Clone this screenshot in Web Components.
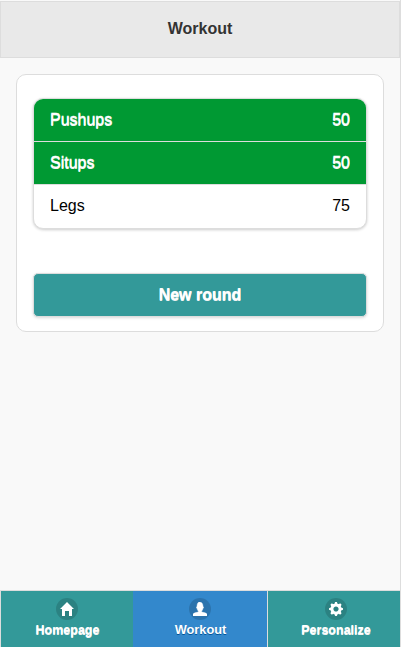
<!DOCTYPE html>
<html lang="en">
<head>
<meta charset="utf-8">
<title>Workout</title>
<style>
html, body { margin: 0; height: 100%; overflow: hidden; }
body { font: 16px/1.3 "Liberation Sans", Arial, sans-serif; color: #333; background: #f9f9f9; }
</style>
</head>
<body>
<workout-app>
  <app-header slot="header">Workout</app-header>
  <workout-card>
    <exercise-list>
      <exercise-row done>Pushups<span slot="count">50</span></exercise-row>
      <exercise-row done>Situps<span slot="count">50</span></exercise-row>
      <exercise-row>Legs<span slot="count">75</span></exercise-row>
    </exercise-list>
    <action-button>New round</action-button>
  </workout-card>
  <nav-bar slot="footer">
    <nav-tab icon="home">Homepage</nav-tab>
    <nav-tab icon="user" active>Workout</nav-tab>
    <nav-tab icon="gear">Personalize</nav-tab>
  </nav-bar>
</workout-app>
<script>
const define = (name, html, setup) => customElements.define(name, class extends HTMLElement {
  constructor() {
    super();
    this.attachShadow({ mode: "open" }).innerHTML = html;
  }
  connectedCallback() { if (setup) setup(this); }
});

define("workout-app", `<style>
  :host { display: flex; flex-direction: column; box-sizing: border-box; height: 647px; width: 401px; padding-top: 1px; border-right: 1px solid #ddd; background: #f9f9f9; }
  main { flex: 1; padding: 16px; }
</style><slot name="header"></slot><main><slot></slot></main><slot name="footer"></slot>`);

define("app-header", `<style>
  :host { display: flex; align-items: center; justify-content: center; box-sizing: border-box; height: 57px; border: 1px solid #ddd; background: #e9e9e9; color: #333; font-weight: bold; text-shadow: 0 1px 0 #eee; padding-bottom: 1px; }
</style><slot></slot>`);

define("workout-card", `<style>
  :host { display: flex; flex-direction: column; gap: 44px; box-sizing: border-box; height: 258px; padding: 23px 16px 0; border: 1px solid #ddd; border-radius: 10px; background: #fff; }
</style><slot></slot>`);

define("exercise-list", `<style>
  :host { display: block; overflow: hidden; border: 1px solid #ddd; border-radius: 10px; box-shadow: 0 1px 3px rgba(0,0,0,.2); background: #fff; }
  ::slotted(:not(:first-child)) { border-top: 1px solid #ddd; }
</style><slot></slot>`);

define("exercise-row", `<style>
  :host { display: flex; justify-content: space-between; align-items: center; box-sizing: content-box; height: 43px; padding: 0 16px; color: #000; }
  :host([done]) { height: 42px; background: #093; color: #fff; text-shadow: 0 1px 0 #f3f3f3; -webkit-text-stroke: .3px #fff; }
</style><span><slot></slot></span><slot name="count"></slot>`);

define("action-button", `<style>
  :host { display: flex; align-items: center; justify-content: center; height: 42px; border: 1px solid #ddd; border-radius: 5px; background: #399; color: #fff; font-weight: bold; text-shadow: 0 1px 0 #f3f3f3; -webkit-text-stroke: .2px #fff; box-shadow: 0 1px 3px rgba(0,0,0,.15); }
</style><slot></slot>`);

define("nav-bar", `<style>
  :host { display: grid; grid-template-columns: 132px 135px 132px; height: 56px; border-top: 1px solid #ddd; border-left: 1px solid #ddd; }
</style><slot></slot>`);

const icons = {
  home: `<path d="M7 0 0 7h2v7h3V9h4v5h3V7h2z"/>`,
  user: `<path stroke="#fff" stroke-width=".4" d="M8.851,10.101c-0.18-0.399-0.2-0.763-0.153-1.104C9.383,8.49,9.738,7.621,9.891,6.465C10.493,6.355,10.5,5.967,10.5,5.5c0-0.437-0.008-0.804-0.502-0.94C9.999,4.539,10,4.521,10,4.5c0-2.103-1-4-2-4C8,0.5,7.5,0,6.5,0C5,0,4,1.877,4,4.5c0,0.021,0.001,0.039,0.002,0.06C3.508,4.696,3.5,5.063,3.5,5.5c0,0.467,0.007,0.855,0.609,0.965C4.262,7.621,4.617,8.49,5.303,8.997c0.047,0.341,0.026,0.704-0.153,1.104C1.503,10.503,0,12,0,12v2h14v-2C14,12,12.497,10.503,8.851,10.101z"/>`,
  gear: `<path fill-rule="evenodd" d="M13.621,5.904l-1.036-0.259c-0.168-0.042-0.303-0.168-0.355-0.332c-0.092-0.284-0.205-0.559-0.339-0.82c-0.079-0.153-0.073-0.337,0.017-0.486l0.549-0.915c0.118-0.196,0.088-0.448-0.075-0.61l-0.862-0.863c-0.162-0.163-0.414-0.193-0.611-0.075l-0.916,0.55C9.844,2.182,9.659,2.188,9.506,2.109C9.244,1.975,8.97,1.861,8.686,1.77c-0.165-0.052-0.29-0.187-0.332-0.354L8.095,0.379C8.039,0.156,7.839,0,7.609,0H6.391c-0.229,0-0.43,0.156-0.485,0.379L5.646,1.415C5.604,1.582,5.479,1.718,5.313,1.77c-0.284,0.092-0.559,0.206-0.82,0.34C4.339,2.188,4.155,2.182,4.007,2.093L3.092,1.544c-0.196-0.118-0.448-0.087-0.61,0.075L1.619,2.481C1.457,2.644,1.426,2.896,1.544,3.093l0.549,0.914c0.089,0.148,0.095,0.332,0.017,0.486C1.975,4.755,1.861,5.029,1.77,5.314c-0.053,0.164-0.188,0.29-0.354,0.332L0.379,5.905C0.156,5.961,0,6.161,0,6.391v1.219c0,0.229,0.156,0.43,0.379,0.485l1.036,0.26C1.582,8.396,1.717,8.521,1.77,8.687c0.092,0.284,0.205,0.559,0.34,0.82C2.188,9.66,2.182,9.844,2.093,9.993l-0.549,0.915c-0.118,0.195-0.087,0.448,0.075,0.61l0.862,0.862c0.162,0.163,0.414,0.193,0.61,0.075l0.915-0.549c0.148-0.089,0.332-0.095,0.486-0.017c0.262,0.135,0.536,0.248,0.82,0.34c0.165,0.053,0.291,0.187,0.332,0.354l0.259,1.036C5.96,13.844,6.16,14,6.39,14h1.22c0.229,0,0.43-0.156,0.485-0.379l0.259-1.036c0.042-0.167,0.168-0.302,0.333-0.354c0.284-0.092,0.559-0.205,0.82-0.34c0.154-0.078,0.338-0.072,0.486,0.017l0.914,0.549c0.197,0.118,0.449,0.088,0.611-0.074l0.862-0.863c0.163-0.162,0.193-0.415,0.075-0.611l-0.549-0.915c-0.089-0.148-0.096-0.332-0.017-0.485c0.134-0.263,0.248-0.536,0.339-0.82c0.053-0.165,0.188-0.291,0.355-0.333l1.036-0.259C13.844,8.039,14,7.839,14,7.609V6.39C14,6.16,13.844,5.96,13.621,5.904z M7,9.6c-1.436,0-2.6-1.164-2.6-2.6s1.164-2.6,2.6-2.6s2.6,1.164,2.6,2.6S8.436,9.6,7,9.6z"/>`
};

define("nav-tab", `<style>
  :host { display: flex; flex-direction: column; align-items: center; box-sizing: border-box; padding-top: 7px; background: #399; color: #fff; font-size: 12.5px; line-height: 16px; font-weight: bold; text-shadow: 0 1px 0 #f3f3f3; }
  :host(:first-child) span:last-child { padding-left: 1px; }
  :host(:last-child) { padding-left: 4px; }
  :host([active]) { background: #38c; border-right: 1px solid #ddd; text-shadow: 0 1px 0 #059; }
  :host([active]) span:last-child { padding-left: 1px; font-size: 12.8px; }
  .disc { display: grid; place-items: center; width: 22px; height: 22px; margin-bottom: 2px; border-radius: 50%; background: rgba(0,0,0,.15); }
  svg { display: block; width: 14px; height: 14px; fill: #fff; }
</style><span class="disc"><svg viewBox="0 0 14 14"></svg></span><span><slot></slot></span>`,
  el => { el.shadowRoot.querySelector("svg").innerHTML = icons[el.getAttribute("icon")]; });
</script>
</body>
</html>
